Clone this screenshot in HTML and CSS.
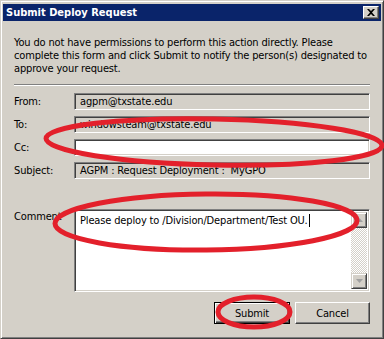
FILE: index.html
```html
<!DOCTYPE html>
<html>
<head>
<meta charset="utf-8">
<link rel="stylesheet" href="styles.css">
</head>
<body>
<div class="window">
  <div class="titlebar">
    <span class="title">Submit Deploy Request</span>
    <span class="close"><svg width="8" height="7" viewBox="0 0 8 7"><path d="M0 0h2l2 2 2-2h2L5 3.5 8 7H6L4 5 2 7H0l3-3.5z" fill="#000"/></svg></span>
  </div>
  <div class="content">
    <p class="intro">You do not have permissions to perform this action directly. Please complete this form and click Submit to notify the person(s) designated to approve your request.</p>
    <div class="sep"></div>
    <div class="form">
      <span class="label">From:</span><div class="field">agpm@txstate.edu</div>
      <span class="label">To:</span><div class="field">windowsteam@txstate.edu</div>
      <span class="label">Cc:</span><div class="field white"></div>
      <span class="label">Subject:</span><div class="field">AGPM : Request Deployment :&nbsp; MyGPO</div>
    </div>
    <div class="comment-row">
      <span class="label top">Comment</span>
      <div class="textarea">
        <div class="ta-text">Please deploy to /Division/Department/Test OU.<span class="caret"></span></div>
        <div class="scrollbar">
          <div class="sbtn"><svg width="7" height="4" viewBox="0 0 7 4"><path d="M3.5 0L7 4H0z" fill="#a0a0a0"/></svg></div>
          <div class="track"></div>
          <div class="sbtn"><svg width="7" height="4" viewBox="0 0 7 4"><path d="M0 0h7L3.5 4z" fill="#a0a0a0"/></svg></div>
        </div>
      </div>
    </div>
    <div class="buttons">
      <div class="btn default"><span>Submit</span></div>
      <div class="btn"><span>Cancel</span></div>
    </div>
  </div>
  <svg class="marks" width="384" height="339" viewBox="0 0 384 339">
    <g fill="none" stroke="#e3202b" stroke-width="5">
      <ellipse cx="214" cy="142" rx="168" ry="23" transform="rotate(1.2 214 142)"/>
      <ellipse cx="206" cy="222" rx="151" ry="28" transform="rotate(-0.6 206 222)"/>
      <ellipse cx="254" cy="312" rx="36" ry="15"/>
    </g>
  </svg>
</div>
</body>
</html>
```

FILE: styles.css
```css
* { box-sizing: border-box; }
html, body { margin: 0; padding: 0; background: #d4d0c8; }
body {
  font-family: "DejaVu Sans Condensed", "Liberation Sans", sans-serif;
  font-size: 11px;
  color: #000;
}
.window {
  position: relative;
  width: 384px;
  height: 339px;
  background: #d4d0c8;
  border-top: 1px solid #d4d0c8;
  border-left: 1px solid #d4d0c8;
  border-right: 1px solid #404040;
  border-bottom: 1px solid #404040;
  box-shadow: inset 1px 1px #fff, inset -1px -1px #808080;
  padding: 3px 2px 2px 2px;
  display: flex;
  flex-direction: column;
}
.titlebar {
  height: 17px;
  background: #0a246a;
  display: flex;
  align-items: center;
  justify-content: space-between;
  padding: 0 2px 0 3px;
}
.title {
  color: #fff;
  font-weight: bold;
  font-size: 11px;
}
.close {
  width: 16px;
  height: 13px;
  background: #d4d0c8;
  border-top: 1px solid #fff;
  border-left: 1px solid #fff;
  border-right: 1px solid #404040;
  border-bottom: 1px solid #404040;
  box-shadow: inset -1px -1px #808080;
  display: flex;
  align-items: center;
  justify-content: center;
}
.content {
  flex: 1;
  padding: 15px 11px 0 11px;
  display: flex;
  flex-direction: column;
  letter-spacing: -0.15px;
}
.intro {
  margin: 0;
  line-height: 13px;
}
.sep {
  margin-top: 9px;
  height: 2px;
  border-top: 1px solid #808080;
  border-bottom: 1px solid #fff;
}
.form {
  margin-top: 7px;
  display: grid;
  grid-template-columns: 60px 1fr;
  grid-auto-rows: 17px;
  row-gap: 6px;
  align-items: center;
}
.label { line-height: 13px; }
.field {
  height: 17px;
  border-top: 1px solid #808080;
  border-left: 1px solid #808080;
  border-right: 1px solid #fff;
  border-bottom: 1px solid #fff;
  box-shadow: inset 1px 1px #404040, inset -1px -1px #d4d0c8;
  padding: 0 5px;
  line-height: 15px;
  white-space: nowrap;
  overflow: hidden;
}
.field.white { background: #fff; }
.comment-row {
  margin-top: 30px;
  display: grid;
  grid-template-columns: 60px 1fr;
}
.label.top { padding-top: 1px; }
.textarea {
  height: 83px;
  background: #fff;
  border-top: 1px solid #808080;
  border-left: 1px solid #808080;
  border-right: 1px solid #fff;
  border-bottom: 1px solid #fff;
  box-shadow: inset 1px 1px #404040, inset -1px -1px #d4d0c8;
  padding: 2px;
  display: flex;
}
.ta-text {
  flex: 1;
  padding: 2px 3px;
  line-height: 13px;
}
.caret {
  display: inline-block;
  width: 1px;
  height: 13px;
  background: #000;
  vertical-align: top;
  margin-left: 1px;
}
.scrollbar {
  width: 16px;
  display: flex;
  flex-direction: column;
}
.track {
  flex: 1;
  background: repeating-conic-gradient(#fff 0 25%, #d4d0c8 0 50%) 0 0 / 2px 2px;
}
.sbtn {
  height: 16px;
  background: #d4d0c8;
  border-top: 1px solid #d4d0c8;
  border-left: 1px solid #d4d0c8;
  border-right: 1px solid #404040;
  border-bottom: 1px solid #404040;
  box-shadow: inset 1px 1px #fff, inset -1px -1px #808080;
  display: flex;
  align-items: center;
  justify-content: center;
}
.buttons {
  margin-top: 10px;
  display: flex;
  justify-content: flex-end;
  gap: 5px;
}
.btn {
  width: 75px;
  height: 22px;
  border-top: 1px solid #fff;
  border-left: 1px solid #fff;
  border-right: 1px solid #404040;
  border-bottom: 1px solid #404040;
  box-shadow: inset -1px -1px #808080;
  display: flex;
  align-items: center;
  justify-content: center;
}
.btn.default {
  width: 76px;
  border: 1px solid #000;
  box-shadow: inset 1px 1px #fff, inset -1px -1px #404040, inset -2px -2px #808080;
}
.marks {
  position: absolute;
  left: -1px;
  top: -1px;
  pointer-events: none;
}
```
